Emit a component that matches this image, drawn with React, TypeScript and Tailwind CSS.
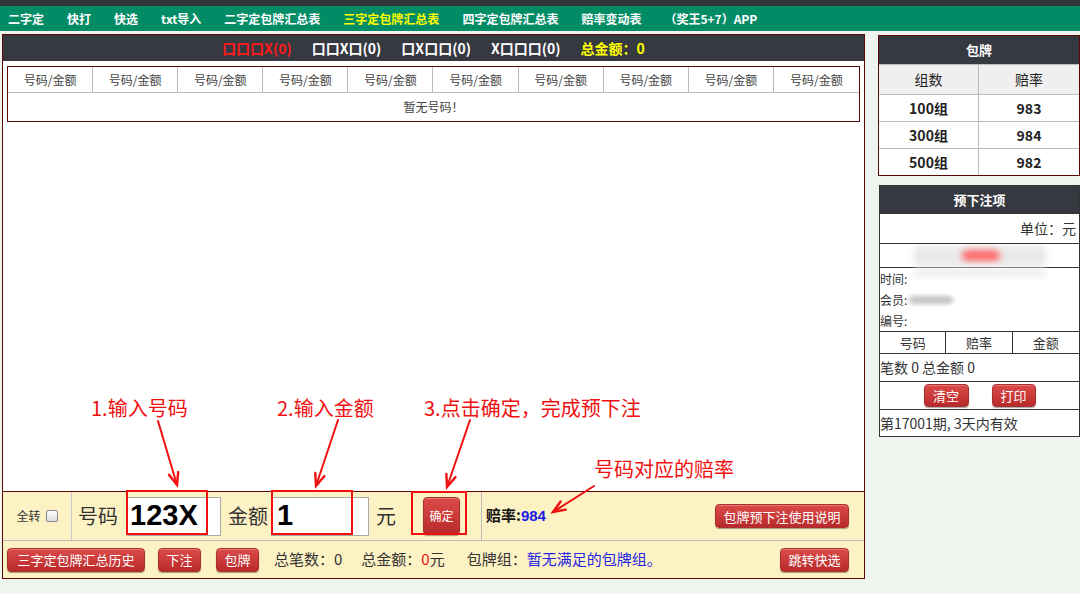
import clsx from "clsx";
import type { ReactNode } from "react";

const navItems = [
  "二字定",
  "快打",
  "快选",
  "txt导入",
  "二字定包牌汇总表",
  "三字定包牌汇总表",
  "四字定包牌汇总表",
  "赔率变动表",
  "（奖王5+7）APP",
];

const cjk = "font-['Noto_Sans_CJK_SC','Liberation_Sans',sans-serif]";

function RedBtn({ children, className }: { children: ReactNode; className?: string }) {
  return (
    <button
      type="button"
      className={clsx(
        "flex items-center justify-center rounded-[4px] border border-[#a8302f] bg-linear-to-b from-[#dc4b4a] to-[#b8292a] text-white leading-none shadow-[0_1px_1px_rgba(0,0,0,0.35),inset_0_1px_0_rgba(255,255,255,0.25)]",
        className
      )}
    >
      {children}
    </button>
  );
}

function arrowHead(x1: number, y1: number, x2: number, y2: number) {
  const a = Math.atan2(y2 - y1, x2 - x1);
  const len = 13;
  const spread = 0.38;
  const p1 = [x2 - len * Math.cos(a - spread), y2 - len * Math.sin(a - spread)];
  const p2 = [x2 - len * Math.cos(a + spread), y2 - len * Math.sin(a + spread)];
  return `${p1[0]},${p1[1]} ${x2},${y2} ${p2[0]},${p2[1]}`;
}

const arrows = [
  [158, 421, 177, 485],
  [338, 420, 316, 486],
  [470, 420, 447, 487],
  [594, 486, 553, 512],
];

function Annotations() {
  return (
    <>
      <svg className="pointer-events-none absolute left-0 top-0" width="1080" height="594">
        {arrows.map(([x1, y1, x2, y2], i) => (
          <g key={i} stroke="#f01010" strokeWidth="2" fill="none" strokeLinecap="round">
            <line x1={x1} y1={y1} x2={x2} y2={y2} />
            <polyline points={arrowHead(x1, y1, x2, y2)} strokeWidth="2.4" />
          </g>
        ))}
      </svg>
      <div className="pointer-events-none absolute left-[91px] top-[393px] text-[20px] text-[#f01010]">1.输入号码</div>
      <div className="pointer-events-none absolute left-[277px] top-[393px] text-[20px] text-[#f01010]">2.输入金额</div>
      <div className="pointer-events-none absolute left-[424px] top-[393px] text-[20px] text-[#f01010]">3.点击确定，完成预下注</div>
      <div className="pointer-events-none absolute left-[594px] top-[454px] text-[20px] text-[#f01010]">号码对应的赔率</div>
      <div className="pointer-events-none absolute left-[126px] top-[490px] h-[45px] w-[82px] border-2 border-[#f01010]" />
      <div className="pointer-events-none absolute left-[271px] top-[490px] h-[45px] w-[82px] border-2 border-[#f01010]" />
      <div className="pointer-events-none absolute left-[411px] top-[491px] h-[44px] w-[56px] border-2 border-[#f01010]" />
    </>
  );
}

function LeftPanel() {
  return (
    <div className="flex h-[545px] w-[863px] flex-col border border-[#5c0606] bg-white">
      <div className="flex h-[26px] items-center justify-center gap-5 bg-[#363940] text-[14px] font-bold">
        <span className="text-[#ff1a1a]">口口口X(0)</span>
        <span className="text-white">口口X口(0)</span>
        <span className="text-white">口X口口(0)</span>
        <span className="text-white">X口口口(0)</span>
        <span className="text-[#ffff00]">总金额：0</span>
      </div>

      <div className="mx-[4px] mt-[5px] border border-[#5c0606]">
        <div className="grid h-[26px] grid-cols-10 border-b border-[#bbb]">
          {Array.from({ length: 10 }).map((_, i) => (
            <div
              key={i}
              className={clsx(
                "flex items-center justify-center text-[12px] text-[#444]",
                i < 9 && "border-r border-[#bbb]"
              )}
            >
              号码/金额
            </div>
          ))}
        </div>
        <div className="flex h-[28px] items-center justify-center text-[12px] text-[#444]">暂无号码！</div>
      </div>

      <div className="flex-1" />

      <div className="border-t border-[#5c0606] bg-[#fdf2c4]">
        <div className="flex h-[49px] items-center border-b border-[#bbb]">
          <div className="flex h-full w-[69px] items-center justify-center gap-[5px] border-r border-[#ccc] text-[12px] text-[#333]">
            全转
            <span className="h-[12px] w-[12px] rounded-[2px] border border-[#888] bg-linear-to-b from-white to-[#ddd]" />
          </div>
          <span className="ml-[6px] text-[20px] text-[#333]">号码</span>
          <div className="ml-[9px] flex h-[39px] w-[94px] items-center border border-[#aaa] bg-white pl-[2px] font-['Liberation_Sans',sans-serif] text-[29px] font-bold text-black">
            123X
          </div>
          <span className="ml-[7px] text-[20px] text-[#333]">金额</span>
          <div className="ml-[3px] flex h-[39px] w-[98px] items-center border border-[#aaa] bg-white pl-[5px] font-['Liberation_Sans',sans-serif] text-[29px] font-bold text-black">
            1
          </div>
          <span className="ml-[7px] text-[20px] text-[#333]">元</span>
          <RedBtn className="ml-[27px] h-[38px] w-[37px] text-[12px]">确定</RedBtn>
          <div className="ml-[21px] h-full border-l border-[#bbb]" />
          <span className="ml-[4px] text-[15px] font-bold text-[#111]">
            赔率:<span className="font-['Liberation_Sans',sans-serif] text-[#1a1ae8]">984</span>
          </span>
          <div className="flex-1" />
          <RedBtn className="mr-[15px] h-[24px] w-[134px] text-[13px]">包牌预下注使用说明</RedBtn>
        </div>
        <div className="flex h-[37px] items-center pl-[4px] text-[15px] text-[#333]">
          <RedBtn className="h-[24px] w-[138px] text-[13px]">三字定包牌汇总历史</RedBtn>
          <RedBtn className="ml-[13px] h-[24px] w-[43px] text-[13px]">下注</RedBtn>
          <RedBtn className="ml-[15px] h-[24px] w-[43px] text-[13px]">包牌</RedBtn>
          <span className="ml-[15px]">总笔数：0</span>
          <span className="ml-[19px]">
            总金额：<span className="text-[#f01010]">0</span>元
          </span>
          <span className="ml-[22px]">
            包牌组：<span className="text-[#2626e6]">暂无满足的包牌组。</span>
          </span>
          <div className="flex-1" />
          <RedBtn className="mr-[15px] h-[24px] w-[69px] text-[13px]">跳转快选</RedBtn>
        </div>
      </div>
    </div>
  );
}

function RightColumn() {
  return (
    <div className="mt-px flex w-[202px] flex-col">
      <div className="border border-[#5c0606] bg-white text-[14px] font-bold text-[#222]">
        <div className="flex h-[28px] items-center justify-center bg-[#363940] text-[13px] text-white">包牌</div>
        <div className="grid h-[30px] grid-cols-2 border-t border-[#bbb] bg-[#efefef]">
          <div className="flex items-center justify-center border-r border-[#bbb] font-normal">组数</div>
          <div className="flex items-center justify-center font-normal">赔率</div>
        </div>
        {[
          ["100组", "983"],
          ["300组", "984"],
          ["500组", "982"],
        ].map(([g, r]) => (
          <div key={g} className="grid h-[27px] grid-cols-2 border-t border-[#bbb]">
            <div className="flex items-center justify-center border-r border-[#bbb]">{g}</div>
            <div className="flex items-center justify-center">{r}</div>
          </div>
        ))}
      </div>

      <div className="mt-[9px] ml-px w-[201px] border border-[#333] bg-white text-[14px] text-[#333]">
        <div className="flex h-[27px] items-center justify-center bg-[#363940] text-[13px] font-bold text-white">预下注项</div>
        <div className="flex h-[30px] items-center justify-end border-t border-[#333] pr-[3px]">单位：元</div>
        <div className="relative h-[24px] overflow-hidden border-t border-[#333]">
          <div className="absolute left-[34px] top-[2px] h-[20px] w-[132px] bg-[#e9e9e9] blur-[3px]" />
          <div className="absolute left-[82px] top-[6px] h-[11px] w-[38px] rounded-full bg-[#ff6b6b] blur-[3px]" />
        </div>
        <div className="relative flex h-[64px] flex-col justify-center border-t border-[#333] text-[12px] leading-[21px]">
          <div className="absolute left-[34px] top-0 h-[10px] w-[132px] bg-[#f2f2f2] blur-[2px]" />
          <span className="relative">时间:</span>
          <span className="relative flex items-center">
            会员:
            <span className="ml-[2px] h-[8px] w-[44px] rounded-full bg-[#c4c4c4] blur-[2px]" />
          </span>
          <span className="relative">编号:</span>
        </div>
        <div className="grid h-[22px] grid-cols-3 border-t border-[#333] text-[13px]">
          <div className="flex items-center justify-center border-r border-[#333]">号码</div>
          <div className="flex items-center justify-center border-r border-[#333]">赔率</div>
          <div className="flex items-center justify-center">金额</div>
        </div>
        <div className="flex h-[28px] items-center border-t border-[#333]">笔数 0 总金额 0</div>
        <div className="flex h-[28px] items-center justify-center gap-[23px] border-t border-[#333]">
          <RedBtn className="h-[23px] w-[45px] text-[13px]">清空</RedBtn>
          <RedBtn className="h-[23px] w-[44px] text-[13px]">打印</RedBtn>
        </div>
        <div className="flex h-[27px] items-center border-t border-[#333]">第17001期, 3天内有效</div>
      </div>
    </div>
  );
}

export default function App() {
  return (
    <div className={clsx("relative h-[594px] w-[1080px] overflow-hidden bg-[#eff4ee]", cjk)}>
      <div className="h-[6px] bg-[#33373c]" />
      <nav className="flex h-[25px] items-center gap-[23px] bg-[#028c66] pl-2 text-[12px] font-bold text-white">
        {navItems.map((item) => (
          <span key={item} className={clsx(item === "三字定包牌汇总表" && "text-[#ffff00]")}>
            {item}
          </span>
        ))}
      </nav>
      <div className="flex gap-[13px] pl-[2px] pt-[3px]">
        <LeftPanel />
        <RightColumn />
      </div>
      <Annotations />
    </div>
  );
}
